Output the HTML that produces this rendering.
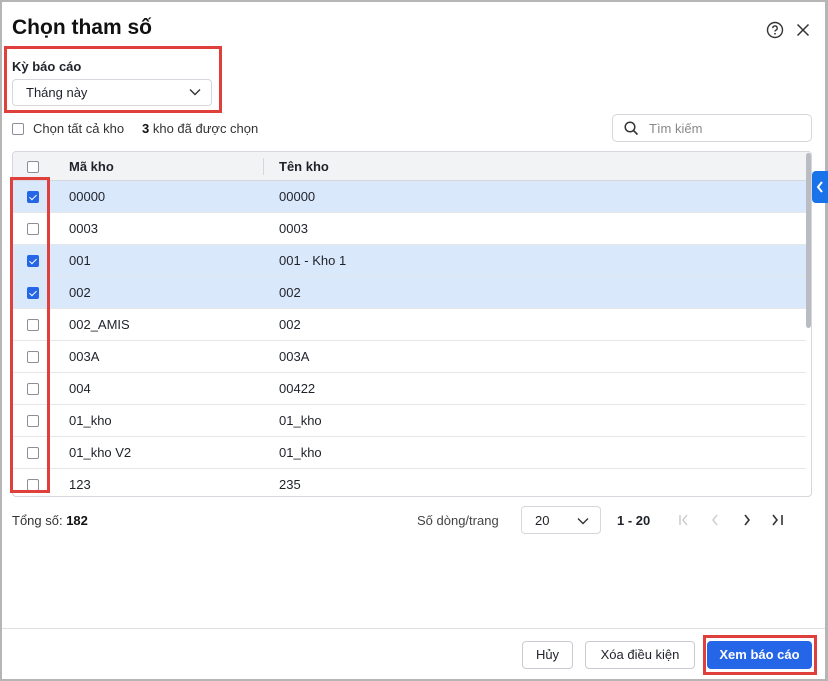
<!DOCTYPE html>
<html><head><meta charset="utf-8"><style>
*{box-sizing:border-box;margin:0;padding:0}
body{width:828px;height:681px;background:#fff;font-family:"Liberation Sans",sans-serif;color:#1f2229;font-size:13px;position:relative;overflow:hidden}
.frame{position:absolute;left:0;top:0;width:828px;height:681px;border:2px solid #b5b5b5;border-right-width:3px}
.abs{position:absolute}
.title{left:12px;top:16px;font-size:21px;font-weight:bold;color:#111}
.red{position:absolute;border:3px solid #e0403c}
.cb{position:absolute;width:12px;height:12px;border:1px solid #8a8f99;border-radius:2px;background:#fff}
.cb.on{background:#2566e8;border-color:#2566e8}
.cb.on:after{content:"";position:absolute;left:3px;top:1px;width:3px;height:6px;border:solid #fff;border-width:0 1.5px 1.5px 0;transform:rotate(45deg)}
.table{position:absolute;left:12px;top:151px;width:800px;height:346px;border:1px solid #d5d7dc;border-radius:4px;overflow:hidden}
.hdr{position:absolute;left:0;top:0;width:798px;height:29px;background:#f2f3f5;border-bottom:1px solid #d5d7dc;font-weight:bold}
.row{position:absolute;left:0;width:793px;height:32px;border-bottom:1px solid #e6e7ea}
.row.sel{background:#dae8fb}
.c1{position:absolute;left:56px;top:8px}
.c2{position:absolute;left:266px;top:8px}
.btn{position:absolute;height:28px;border:1px solid #c9ccd2;border-radius:4px;background:#fff;text-align:center;line-height:26px;font-size:13px}
</style></head><body>
<div class="frame"></div>
<div class="abs title">Chọn tham số</div>
<svg class="abs" style="left:766px;top:21px" width="18" height="18" viewBox="0 0 18 18"><circle cx="9" cy="9" r="7.5" fill="none" stroke="#333" stroke-width="1.4"/><path d="M6.8 7.2a2.2 2.2 0 1 1 3 2c-.6.3-.8.7-.8 1.3" fill="none" stroke="#333" stroke-width="1.4"/><circle cx="9" cy="12.8" r=".9" fill="#333"/></svg>
<svg class="abs" style="left:796px;top:23px" width="14" height="14" viewBox="0 0 14 14"><path d="M1.5 1.5l11 11M12.5 1.5l-11 11" stroke="#333" stroke-width="1.5"/></svg>

<div class="red" style="left:4px;top:46px;width:218px;height:67px"></div>
<div class="abs" style="left:12px;top:59px;font-weight:bold;font-size:13px">Kỳ báo cáo</div>
<div class="abs" style="left:12px;top:79px;width:200px;height:27px;border:1px solid #d5d7dc;border-radius:4px"></div>
<div class="abs" style="left:26px;top:85px">Tháng này</div>
<svg class="abs" style="left:189px;top:88px" width="12" height="8" viewBox="0 0 12 8"><path d="M1 1.5l5 5 5-5" fill="none" stroke="#333" stroke-width="1.4"/></svg>

<div class="cb" style="left:12px;top:123px"></div>
<div class="abs" style="left:33px;top:121px;color:#333">Chọn tất cả kho</div>
<div class="abs" style="left:142px;top:121px;color:#333"><b style="color:#111">3</b> kho đã được chọn</div>
<div class="abs" style="left:612px;top:114px;width:200px;height:28px;border:1px solid #d5d7dc;border-radius:5px"></div>
<svg class="abs" style="left:624px;top:121px" width="15" height="15" viewBox="0 0 15 15"><circle cx="6" cy="6" r="4.8" fill="none" stroke="#333" stroke-width="1.5"/><path d="M9.5 9.5l4 4" stroke="#333" stroke-width="1.6"/></svg>
<div class="abs" style="left:649px;top:121px;color:#888">Tìm kiếm</div>

<div class="table">
 <div class="hdr"><div class="cb" style="left:14px;top:9px"></div><div class="c1" style="top:7px">Mã kho</div><div class="abs" style="left:250px;top:6px;width:1px;height:17px;background:#d5d7dc"></div><div class="c2" style="top:7px">Tên kho</div></div>
 <div class="row sel" style="top:29px"><div class="cb on" style="left:14px;top:10px"></div><div class="c1">00000</div><div class="c2">00000</div></div>
 <div class="row" style="top:61px"><div class="cb" style="left:14px;top:10px"></div><div class="c1">0003</div><div class="c2">0003</div></div>
 <div class="row sel" style="top:93px"><div class="cb on" style="left:14px;top:10px"></div><div class="c1">001</div><div class="c2">001 - Kho 1</div></div>
 <div class="row sel" style="top:125px"><div class="cb on" style="left:14px;top:10px"></div><div class="c1">002</div><div class="c2">002</div></div>
 <div class="row" style="top:157px"><div class="cb" style="left:14px;top:10px"></div><div class="c1">002_AMIS</div><div class="c2">002</div></div>
 <div class="row" style="top:189px"><div class="cb" style="left:14px;top:10px"></div><div class="c1">003A</div><div class="c2">003A</div></div>
 <div class="row" style="top:221px"><div class="cb" style="left:14px;top:10px"></div><div class="c1">004</div><div class="c2">00422</div></div>
 <div class="row" style="top:253px"><div class="cb" style="left:14px;top:10px"></div><div class="c1">01_kho</div><div class="c2">01_kho</div></div>
 <div class="row" style="top:285px"><div class="cb" style="left:14px;top:10px"></div><div class="c1">01_kho V2</div><div class="c2">01_kho</div></div>
 <div class="row" style="top:317px;border:none"><div class="cb" style="left:14px;top:10px"></div><div class="c1">123</div><div class="c2">235</div></div>
 <div class="abs" style="left:793px;top:1px;width:5px;height:175px;background:#b9bcc2;border-radius:3px"></div>
</div>
<div class="abs" style="left:812px;top:171px;width:16px;height:32px;background:#1a73e8;border-radius:4px 0 0 4px"></div>
<svg class="abs" style="left:816px;top:181px" width="8" height="12" viewBox="0 0 8 12"><path d="M6 1L2 6l4 5" fill="none" stroke="#fff" stroke-width="2"/></svg>
<div class="red" style="left:10px;top:177px;width:40px;height:316px"></div>

<div class="abs" style="left:12px;top:513px;color:#333">Tổng số: <b style="color:#111">182</b></div>
<div class="abs" style="left:417px;top:513px;color:#444">Số dòng/trang</div>
<div class="abs" style="left:521px;top:506px;width:80px;height:28px;border:1px solid #d5d7dc;border-radius:4px"></div>
<div class="abs" style="left:535px;top:513px">20</div>
<svg class="abs" style="left:577px;top:517px" width="12" height="8" viewBox="0 0 12 8"><path d="M1 1.5l5 5 5-5" fill="none" stroke="#333" stroke-width="1.4"/></svg>
<div class="abs" style="left:617px;top:513px;font-weight:bold">1 - 20</div>
<svg class="abs" style="left:678px;top:514px" width="110" height="12" viewBox="0 0 110 12"><path d="M2 1v10M9 1L5 6l4 5" fill="none" stroke="#c7c9ce" stroke-width="1.4"/><path d="M39 1l-4 5 4 5" fill="none" stroke="#c7c9ce" stroke-width="1.4"/><path d="M67 1l4 5-4 5" fill="none" stroke="#333" stroke-width="1.6"/><path d="M95 1l4 5-4 5M104 1v10" fill="none" stroke="#333" stroke-width="1.6"/></svg>

<div class="abs" style="left:2px;top:628px;width:823px;height:1px;background:#dfe1e5"></div>
<div class="btn" style="left:522px;top:641px;width:51px">Hủy</div>
<div class="btn" style="left:585px;top:641px;width:110px">Xóa điều kiện</div>
<div class="btn" style="left:707px;top:641px;width:105px;background:#2566e8;border-color:#2566e8;color:#fff;font-weight:bold">Xem báo cáo</div>
<div class="red" style="left:703px;top:635px;width:114px;height:40px"></div>
</body></html>
